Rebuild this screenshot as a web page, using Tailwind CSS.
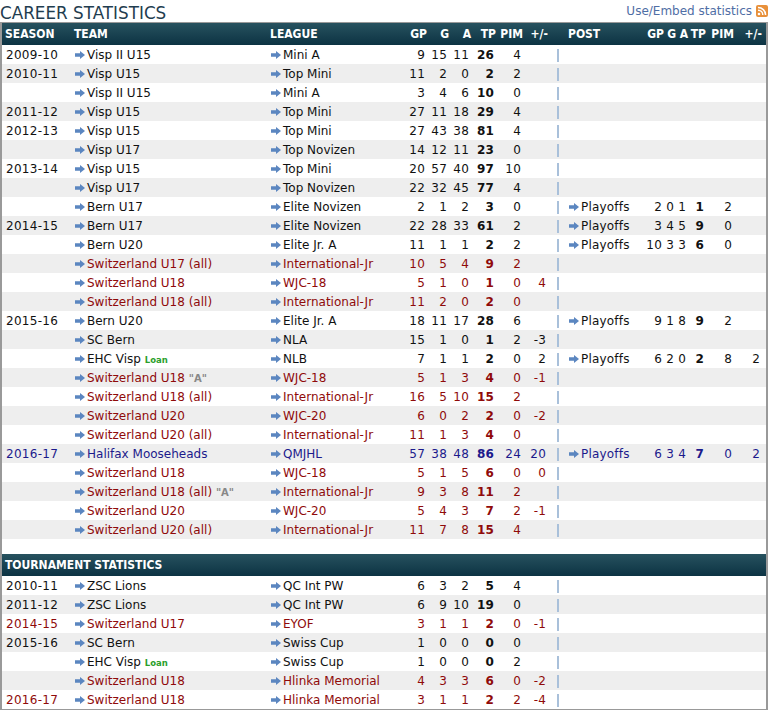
<!DOCTYPE html>
<html lang="en">
<head>
<meta charset="utf-8">
<title>Career statistics</title>
<script src="https://cdn.jsdelivr.net/npm/@tailwindcss/browser@4"></script>
</head>
<body class="bg-white font-['DejaVu_Sans',sans-serif] text-[12px] text-[#111] overflow-hidden">
<div class="w-[768px] h-[710px]">
  <div class="flex justify-between h-[22px]">
    <h2 class="text-[16.8px] leading-[26px] text-[#1f3d4f] font-normal">CAREER STATISTICS</h2>
    <a class="flex items-start gap-[4px] pt-[4px] text-[12px] leading-[14px] text-[#4f6ea5]">Use/Embed statistics
      <svg width="12" height="12" viewBox="0 0 12 12" class="mt-[1px]"><rect width="12" height="12" rx="2" fill="#e8903a"/><circle cx="3" cy="9" r="1.3" fill="#fff"/><path d="M2 5.2a4.8 4.8 0 0 1 4.8 4.8M2 2.4a7.6 7.6 0 0 1 7.6 7.6" fill="none" stroke="#fff" stroke-width="1.5"/></svg>
    </a>
  </div>
  <div class="border-x-2 border-y border-[#999] w-[768px]">
    <table class="table-fixed border-collapse w-[764px] leading-[18px] [&_td]:p-0 [&_td]:h-[19px] [&_td]:pt-[1px] [&_td]:whitespace-nowrap [&_td:nth-child(1)]:tracking-[0.3px] [&_td:nth-child(n+4)]:tracking-[0.2px] [&_th]:p-0 [&_th]:font-bold [&_th]:font-['DejaVu_Sans_Condensed','DejaVu_Sans',sans-serif] [&_th]:text-white [&_th]:text-left [&_th]:whitespace-nowrap [&_thead_th:nth-child(n+4):nth-child(-n+9)]:text-right [&_thead_th:nth-child(n+12)]:text-right [&_thead_th:nth-child(n+4):nth-child(-n+9)]:pr-[1px] [&_thead_th:nth-child(n+12)]:pr-[1px] [&_td:nth-child(n+4):nth-child(-n+9)]:text-right [&_td:nth-child(n+12)]:text-right [&_td:nth-child(n+4):nth-child(-n+9)]:pr-[3px] [&_td:nth-child(n+12)]:pr-[3px] [&_td:nth-child(1)]:pl-[4px] [&_td:nth-child(2)]:pl-[5px] [&_td:nth-child(3)]:pl-[5px] [&_td:nth-child(11)]:pl-[3px] [&_td:nth-child(11)]:tracking-normal [&_td_svg]:inline-block [&_td_svg]:mr-[2px] [&_td_svg]:align-[0px] [&_td_b]:font-bold">
      <colgroup>
        <col class="w-[68px]"><col class="w-[196px]"><col class="w-[137px]"><col class="w-[25px]"><col class="w-[22px]"><col class="w-[22px]"><col class="w-[25px]"><col class="w-[27px]"><col class="w-[25px]"><col class="w-[17px]"><col class="w-[74px]"><col class="w-[25px]"><col class="w-[12px]"><col class="w-[12px]"><col class="w-[18px]"><col class="w-[28px]"><col class="w-[28px]"><col class="w-[3px]">
      </colgroup>
      <thead>
        <tr class="h-[22px] bg-linear-to-b from-[#27525f] to-[#0c3343]">
          <th class="pl-[3px]!">SEASON</th><th class="pl-[4px]!">TEAM</th><th class="pl-[4px]!">LEAGUE</th><th>GP</th><th>G</th><th>A</th><th>TP</th><th>PIM</th><th>+/-</th><th></th><th class="pl-[2px]!">POST</th><th>GP</th><th>G</th><th>A</th><th>TP</th><th>PIM</th><th>+/-</th><th></th>
        </tr>
      </thead>
      <tbody id="career" class="[&_tr:nth-child(even)]:bg-[#eee]"></tbody>
      <tbody><tr><td colspan="18" class="h-[15px]! p-0!"></td></tr></tbody>
      <thead>
        <tr class="h-[22px] bg-linear-to-b from-[#27525f] to-[#0c3343]"><th colspan="18" class="pl-[3px]!">TOURNAMENT STATISTICS</th></tr>
      </thead>
      <tbody id="tournament" class="[&_tr:nth-child(even)]:bg-[#eee]"></tbody>
    </table>
  </div>
</div>
<script>
var RED = 'text-[#8f0a0a]', NAVY = 'text-[#1c1a8c]', BLK = '';
var LOAN = ' <span class="text-[8.5px] leading-[0] font-bold text-[#2ba02b]">Loan</span>';
var CAP = ' <span class="text-[10px] leading-[0] font-bold text-[#888]">"A"</span>';
var ARROW = '<svg width="10" height="8" viewBox="0 0 10 8"><path d="M0 2.2h5V0l5 4-5 4V5.8H0z" fill="#5b86c0"/></svg>';
var BAR = '<td><div class="w-[2px] h-[13px] ml-[8px] bg-[#a9c0da]"></div></td>';
function row(c, season, team, league, s, post) {
  var n = function (a) { return a.map(function (v, i) { return '<td>' + (i === 3 ? '<b>' + v + '</b>' : v) + '</td>'; }).join(''); };
  var h = '<tr class="' + c + '"><td>' + season + '</td><td>' + ARROW + team + '</td><td>' + ARROW + league + '</td>' + n(s) + BAR;
  h += post ? '<td>' + ARROW + 'Playoffs</td>' + n(post) + '<td></td>' : '<td colspan="8"></td>';
  return h + '</tr>';
}
var I = 'International-Jr', S = 'Switzerland ';
var career = [
[BLK,'2009-10','Visp II U15','Mini A',[9,15,11,26,4,'']],
[BLK,'2010-11','Visp U15','Top Mini',[11,2,0,2,2,'']],
[BLK,'','Visp II U15','Mini A',[3,4,6,10,0,'']],
[BLK,'2011-12','Visp U15','Top Mini',[27,11,18,29,4,'']],
[BLK,'2012-13','Visp U15','Top Mini',[27,43,38,81,4,'']],
[BLK,'','Visp U17','Top Novizen',[14,12,11,23,0,'']],
[BLK,'2013-14','Visp U15','Top Mini',[20,57,40,97,10,'']],
[BLK,'','Visp U17','Top Novizen',[22,32,45,77,4,'']],
[BLK,'','Bern U17','Elite Novizen',[2,1,2,3,0,''],[2,0,1,1,2,'']],
[BLK,'2014-15','Bern U17','Elite Novizen',[22,28,33,61,2,''],[3,4,5,9,0,'']],
[BLK,'','Bern U20','Elite Jr. A',[11,1,1,2,2,''],[10,3,3,6,0,'']],
[RED,'',S+'U17 (all)',I,[10,5,4,9,2,'']],
[RED,'',S+'U18','WJC-18',[5,1,0,1,0,4]],
[RED,'',S+'U18 (all)',I,[11,2,0,2,0,'']],
[BLK,'2015-16','Bern U20','Elite Jr. A',[18,11,17,28,6,''],[9,1,8,9,2,'']],
[BLK,'','SC Bern','NLA',[15,1,0,1,2,-3]],
[BLK,'','EHC Visp'+LOAN,'NLB',[7,1,1,2,0,2],[6,2,0,2,8,2]],
[RED,'',S+'U18'+CAP,'WJC-18',[5,1,3,4,0,-1]],
[RED,'',S+'U18 (all)',I,[16,5,10,15,2,'']],
[RED,'',S+'U20','WJC-20',[6,0,2,2,0,-2]],
[RED,'',S+'U20 (all)',I,[11,1,3,4,0,'']],
[NAVY,'2016-17','Halifax Mooseheads','QMJHL',[57,38,48,86,24,20],[6,3,4,7,0,2]],
[RED,'',S+'U18','WJC-18',[5,1,5,6,0,0]],
[RED,'',S+'U18 (all)'+CAP,I,[9,3,8,11,2,'']],
[RED,'',S+'U20','WJC-20',[5,4,3,7,2,-1]],
[RED,'',S+'U20 (all)',I,[11,7,8,15,4,'']]
];
var tournament = [
[BLK,'2010-11','ZSC Lions','QC Int PW',[6,3,2,5,4,'']],
[BLK,'2011-12','ZSC Lions','QC Int PW',[6,9,10,19,0,'']],
[RED,'2014-15',S+'U17','EYOF',[3,1,1,2,0,-1]],
[BLK,'2015-16','SC Bern','Swiss Cup',[1,0,0,0,0,'']],
[BLK,'','EHC Visp'+LOAN,'Swiss Cup',[1,0,0,0,2,'']],
[RED,'',S+'U18','Hlinka Memorial',[4,3,3,6,0,-2]],
[RED,'2016-17',S+'U18','Hlinka Memorial',[3,1,1,2,2,-4]]
];
function fill(id, rows) {
  document.getElementById(id).innerHTML = rows.map(function (r) { return row.apply(null, r); }).join('');
}
fill('career', career);
fill('tournament', tournament);
</script>
</body>
</html>
